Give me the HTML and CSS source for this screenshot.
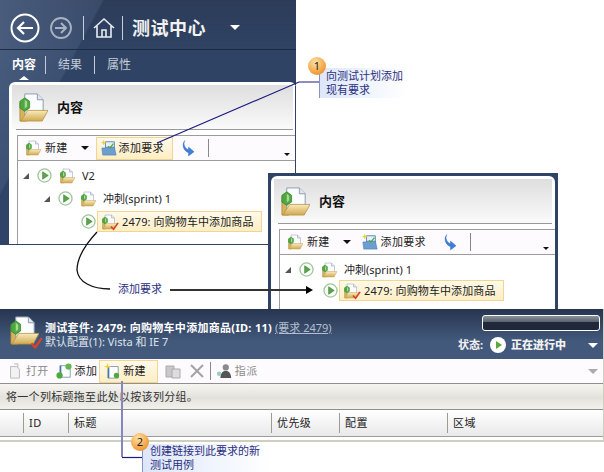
FILE: index.html
```html
<!DOCTYPE html>
<html lang="zh-CN">
<head>
    <meta charset="UTF-8">
    <title>测试中心</title>
    <link rel="stylesheet" href="styles.css">
</head>
<body>
    <svg class="defs" width="0" height="0">
        <defs>
            <linearGradient id="folderFill" x1="0" y1="0" x2="0" y2="1">
                <stop offset="0" stop-color="#f7ebbd"/>
                <stop offset="1" stop-color="#d2a94f"/>
            </linearGradient>
            <symbol id="folder" viewBox="0 0 32 32">
                <path d="M3 11h7v19H3z" fill="#d8b35c" stroke="#a98333" stroke-width=".8"/>
                <path d="M8 2h13l6 6v16H8z" fill="#fbfcfe" stroke="#8f9bb0"/>
                <path d="M21 2v6h6" fill="#dfe5ee" stroke="#8f9bb0"/>
                <path d="M4 30l7-11h21l-6 11z" fill="url(#folderFill)" stroke="#b8923f" stroke-width=".8"/>
                <path d="M8 6l5 3.500v7L8 20l-5-3.500v-7z" fill="#4fa83f" stroke="#2f7d2a" stroke-width=".7"/>
                <path d="M8 8l2.500 2v5L8 17z" fill="#a5dc8e"/>
            </symbol>
            <symbol id="play" viewBox="0 0 16 16">
                <circle cx="8" cy="8" r="7" fill="#fff" stroke="#9cc896" stroke-width="1.400"/>
                <path d="M6 4l6 4-6 4z" fill="#5ca548" stroke="#2f7a2a" stroke-width=".6"/>
            </symbol>
            <symbol id="check" viewBox="0 0 10 10">
                <path d="M1 5l3 3 5-7" fill="none" stroke="#d8412e" stroke-width="1.800"/>
            </symbol>
            <symbol id="refresh" viewBox="0 0 14 18">
                <path d="M3 1C1 5 3 9 7 11V8l6 5-6 4.500V14C2 12-1 6 3 1z" fill="#3f7fd8" stroke="#2a62b5" stroke-width=".4"/>
            </symbol>
            <symbol id="req" viewBox="0 0 18 18">
                <path d="M5 2h10v13H5z" fill="#e6f0fa" stroke="#4d7fb5"/>
                <path d="M1 9h4l1-1h9l2 9H2z" fill="#6e9ed0" stroke="#4d7fb5" stroke-width=".7"/>
                <path d="M8 7l2 2 4-5" fill="none" stroke="#4fa83f" stroke-width="1.400"/>
                <path d="M3 0l1 2 2 1-2 1-1 2-1-2-2-1 2-1z" fill="#f0d040"/>
            </symbol>
        </defs>
    </svg>

    <section class="window win-main">
        <div class="nav-bar">
            <svg class="nav-back" viewBox="0 0 30 30"><circle cx="15" cy="15" r="13.500" fill="none" stroke="#fff" stroke-width="2"/><path d="M23 15H8M14 9l-6 6 6 6" fill="none" stroke="#fff" stroke-width="2.200"/></svg>
            <svg class="nav-fwd" viewBox="0 0 22 22"><circle cx="11" cy="11" r="10" fill="none" stroke="#a9b2c0" stroke-width="1.800"/><path d="M5 11h11M11 6l5 5-5 5" fill="none" stroke="#a9b2c0" stroke-width="2"/></svg>
            <span class="nav-sep"></span>
            <svg class="nav-home" viewBox="0 0 22 22"><path d="M1 11L11 2l10 9M4 9v11h14V9M9 20v-7h4v7" fill="none" stroke="#e8ebf0" stroke-width="1.600"/></svg>
            <span class="nav-sep"></span>
            <span class="nav-title">测试中心</span>
            <span class="arrow-down white nav-arrow"></span>
        </div>
        <div class="tabs">
            <span class="tab active">内容</span>
            <span class="tab">结果</span>
            <span class="tab">属性</span>
        </div>
        <div class="card">
            <div class="card-head">
                <svg class="head-icon"><use href="#folder"/></svg>
                <span class="card-title">内容</span>
            </div>
            <div class="head-rule"></div>
            <div class="toolbar">
                <span class="tool"><svg class="icon"><use href="#folder"/></svg>新建</span>
                <span class="arrow-down tool-arrow"></span>
                <span class="tool hot"><svg class="icon"><use href="#req"/></svg>添加要求</span>
                <svg class="refresh"><use href="#refresh"/></svg>
                <span class="tool-sep"></span>
                <span class="arrow-down tiny"></span>
            </div>
            <div class="tree">
                <div class="node">
                    <span class="twist"></span>
                    <svg class="play"><use href="#play"/></svg>
                    <svg class="icon"><use href="#folder"/></svg>
                    <span>V2</span>
                </div>
                <div class="node lvl1">
                    <span class="twist"></span>
                    <svg class="play"><use href="#play"/></svg>
                    <svg class="icon"><use href="#folder"/></svg>
                    <span>冲刺(sprint) 1</span>
                </div>
                <div class="node lvl2">
                    <svg class="play"><use href="#play"/></svg>
                    <span class="picked"><span class="icon-wrap"><svg class="icon"><use href="#folder"/></svg><svg class="check"><use href="#check"/></svg></span>2479: 向购物车中添加商品</span>
                </div>
            </div>
        </div>
    </section>

    <section class="window win-detail">
        <div class="card">
            <div class="card-head">
                <svg class="head-icon"><use href="#folder"/></svg>
                <span class="card-title">内容</span>
            </div>
            <div class="head-rule"></div>
            <div class="toolbar">
                <span class="tool"><svg class="icon"><use href="#folder"/></svg>新建</span>
                <span class="arrow-down tool-arrow"></span>
                <span class="tool plain"><svg class="icon"><use href="#req"/></svg>添加要求</span>
                <svg class="refresh"><use href="#refresh"/></svg>
                <span class="tool-sep"></span>
                <span class="arrow-down tiny"></span>
            </div>
            <div class="tree">
                <div class="node">
                    <span class="twist"></span>
                    <svg class="play"><use href="#play"/></svg>
                    <svg class="icon"><use href="#folder"/></svg>
                    <span>冲刺(sprint) 1</span>
                </div>
                <div class="node lvl2">
                    <svg class="play"><use href="#play"/></svg>
                    <span class="picked"><span class="icon-wrap"><svg class="icon"><use href="#folder"/></svg><svg class="check"><use href="#check"/></svg></span>2479: 向购物车中添加商品</span>
                </div>
            </div>
        </div>
    </section>

    <section class="window win-suite">
        <div class="suite-head">
            <span class="icon-wrap suite-icon"><svg class="head-icon"><use href="#folder"/></svg><svg class="check big"><use href="#check"/></svg></span>
            <div class="suite-text">
                <div><b>测试套件: 2479: 向购物车中添加商品(ID: 11)</b> <a class="suite-link">(要求 2479)</a></div>
                <div class="suite-config">默认配置(1): Vista 和 IE 7</div>
            </div>
            <div class="suite-side">
                <div class="progress"></div>
                <div class="status">状态: <svg class="status-play" viewBox="0 0 16 16"><circle cx="8" cy="8" r="8" fill="#fff"/><path d="M6 4l6 4-6 4z" fill="#5aa83c"/></svg><b>正在进行中</b><span class="arrow-down white"></span></div>
            </div>
        </div>
        <div class="suite-tools">
            <span class="stool muted"><svg class="icon" viewBox="0 0 16 18"><path d="M3 4h7l3 3v10H3z" fill="#f2f2f2" stroke="#b5b5b5"/><path d="M7 1h4v5" fill="none" stroke="#c5c5c5" stroke-width="1.500"/></svg>打开</span>
            <span class="stool add"><svg class="icon" viewBox="0 0 18 18"><path d="M5 3h11v13H5z" fill="#fff" stroke="#7b96b8"/><path d="M5 3v13" stroke="#3f78b5" stroke-width="2"/><circle cx="4" cy="14" r="3.500" fill="#4fa83f"/><circle cx="14" cy="4" r="3.500" fill="#62b84e"/></svg>添加</span>
            <span class="stool hot"><svg class="icon" viewBox="0 0 18 18"><path d="M5 4h11v13H5z" fill="#fff" stroke="#7b96b8"/><path d="M5 4v13" stroke="#3f78b5" stroke-width="2"/><circle cx="14" cy="14" r="3" fill="#4fa83f"/><path d="M4 0l1 3 3 1-3 1-1 3-1-3-3-1 3-1z" fill="#f0d040"/></svg>新建</span>
            <svg class="icon copy" viewBox="0 0 16 16"><path d="M1 3h8v11H1z" fill="#c9c9c9" stroke="#aaa"/><path d="M7 6h8v9H7z" fill="#ddd" stroke="#aaa"/></svg>
            <svg class="icon del" viewBox="0 0 14 14"><path d="M1 1l12 12M13 1L1 13" stroke="#a3a3a3" stroke-width="2"/></svg>
            <span class="tool-sep short"></span>
            <span class="stool muted"><svg class="icon" viewBox="0 0 18 18"><circle cx="11" cy="5" r="3.500" fill="#8a8a8a"/><path d="M5 17c0-6 3-8 6-8s6 2 6 8z" fill="#555"/><circle cx="3.500" cy="12" r="2.500" fill="#9cc"/></svg>指派</span>
            <span class="arrow-down grey"></span>
        </div>
        <div class="group-bar">将一个列标题拖至此处以按该列分组。</div>
        <div class="col-head">
            <span class="col c-mark"></span>
            <span class="col c-id">ID</span>
            <span class="col c-title">标题</span>
            <span class="col c-pri">优先级</span>
            <span class="col c-cfg">配置</span>
            <span class="col c-area">区域</span>
        </div>
    </section>

    <svg class="wires" width="604" height="472" viewBox="0 0 604 472">
        <path d="M157 143L299 82H320" fill="none" stroke="#1c1c80" stroke-width="1.200"/>
        <path d="M295.500 86V173" fill="none" stroke="#2f4364"/>
        <path d="M97 232C84 246 77 258 77 270C78 282 92 289 110 289" fill="none" stroke="#111" stroke-width="1.300"/>
        <path d="M170 290H308" stroke="#333" stroke-width="2"/>
        <path d="M306 286l7 4-7 4z" fill="#000"/>
        <path d="M122 381V457" stroke="#8585c0" stroke-width="2"/>
        <path d="M122 457.500H143" stroke="#1c1c80" stroke-width="1.200"/>
    </svg>

    <div class="callout call-one"><span class="badge">1</span>向测试计划添加<br>现有要求</div>
    <div class="wire-label">添加要求</div>
    <div class="callout call-two"><span class="badge">2</span>创建链接到此要求的新<br>测试用例</div>
</body>
</html>
```

FILE: styles.css
```css
* {
    box-sizing: border-box;
}
html, body {
    margin: 0;
    height: 100%;
    background: #fff;
    overflow: hidden;
}
body {
    position: relative;
    font-family: "Noto Sans", "Noto Sans CJK SC", sans-serif;
    font-size: 11px;
    line-height: 14px;
    color: #222;
}
.defs {
    position: absolute;
}
svg {
    display: block;
    flex: none;
}

/* the three screenshots lie freely on the page */
.window {
    position: absolute;
}
.win-main {
    left: 0;
    top: 0;
    width: 296px;
    height: 245px;
    display: flex;
    flex-direction: column;
    background:
        linear-gradient(118deg, rgba(110, 130, 165, .45) 0, rgba(90, 110, 145, .3) 24%, transparent 24.500%),
        linear-gradient(#2c3c58, #2f4364 50px, #2f4468);
}
.win-detail {
    left: 268px;
    top: 173px;
    width: 290px;
    height: 136px;
    padding: 3px 3px 0;
    background: #2f4364;
    z-index: 1;
}
.win-suite {
    left: 0;
    top: 309px;
    width: 604px;
    height: 133px;
    display: flex;
    flex-direction: column;
    background: #fff;
    border-bottom: 2px solid #cfcfbf;
    border-right: 1px solid #cfcfbf;
    z-index: 1;
}

/* top nav */
.nav-bar {
    height: 50px;
    display: flex;
    align-items: center;
    padding: 6px 0 0 10px;
    border-bottom: 1px solid #1f2b40;
}
.nav-back {
    width: 30px;
    height: 30px;
}
.nav-fwd {
    width: 22px;
    height: 22px;
    margin-left: 10px;
}
.nav-sep {
    width: 1px;
    height: 24px;
    background: #c8cfda;
    margin-left: 11px;
}
.nav-home {
    width: 22px;
    height: 22px;
    margin-left: 9px;
}
.nav-home + .nav-sep {
    margin-left: 7px;
}
.nav-title {
    margin-left: 9px;
    font-size: 18px;
    letter-spacing: .5px;
    font-weight: 700;
    color: #f2f2f2;
}
.nav-arrow {
    margin-left: 24px;
}
.arrow-down {
    width: 0;
    height: 0;
    border-style: solid;
    border-width: 5px 5px 0;
    border-color: #111 transparent transparent;
    flex: none;
}
.arrow-down.white {
    border-width: 5px 5px 0;
    border-top-color: #fff;
}
.arrow-down.grey {
    border-top-color: #aaa;
    margin-left: auto;
    margin-right: 5px;
}
.arrow-down.tiny {
    border-width: 3px 3px 0;
    margin: 12px 6px 0 auto;
}

.tabs {
    height: 32px;
    display: flex;
    align-items: center;
    padding: 0 0 2px 12px;
    color: #c4ccd8;
    font-size: 12px;
}
.tab {
    padding-right: 12px;
    margin-right: 12px;
    border-right: 1px solid #c4ccd8;
    line-height: 18px;
}
.tab:last-child {
    border-right: 0;
}
.tab.active {
    position: relative;
    color: #fff;
    font-weight: 700;
    padding-right: 9px;
}
.tab.active::after {
    content: "";
    position: absolute;
    left: 7px;
    bottom: -6px;
    border: solid transparent;
    border-width: 0 5px 4px;
    border-bottom-color: #fff;
}

/* content card */
.card {
    flex: 1;
    height: 100%;
    background: #fff;
    border-radius: 6px 6px 0 0;
    overflow: hidden;
    display: flex;
    flex-direction: column;
}
.win-main .card {
    margin-left: 9px;
    margin-bottom: 1px;
}
.card-head {
    height: 44px;
    flex: none;
    margin: 3px 3px 0;
    display: flex;
    align-items: center;
    padding: 0 0 0 5px;
    background: linear-gradient(#dedede, #fafafa);
}
.head-icon {
    width: 31px;
    height: 31px;
}
.card-title {
    margin-left: 9px;
    font-size: 13px;
    font-weight: 700;
    color: #111;
}
.head-rule {
    height: 1px;
    flex: none;
    background: #999;
    margin: 0 3px 5px 7px;
}
.toolbar {
    height: 26px;
    flex: none;
    display: flex;
    align-items: center;
    margin-left: 8px;
    border: 1px solid #9c9c9c;
    border-width: 1px 0 1px 1px;
    background: #fefbfe;
    padding-left: 7px;
    font-size: 11px;
    letter-spacing: .3px;
}
.tool {
    display: flex;
    align-items: center;
    gap: 4px;
}
.tool-arrow {
    border-width: 4px 4px 0;
    margin-left: 13px;
    margin-right: 7px;
}
.tool.hot, .stool.hot {
    height: 23px;
    background: linear-gradient(#fff9e8, #fdeec4);
    border: 1px solid #f2d493;
}
.tool.hot {
    padding: 0 8px 0 4px;
    gap: 2px;
}
.tool.plain {
    padding: 0 0 0 4px;
    gap: 3px;
}
.refresh {
    width: 13px;
    height: 18px;
    margin-left: 9px;
}
.win-detail .refresh {
    margin-left: 18px;
}
.tool-sep {
    width: 1px;
    height: 18px;
    background: #888;
    margin-left: 13px;
}
.icon {
    width: 16px;
    height: 16px;
}
.tree {
    flex: 1;
    padding-top: 3px;
    margin-left: 8px;
    border-left: 1px solid #9c9c9c;
    font-size: 11px;
}
.node {
    display: flex;
    align-items: center;
    height: 23px;
    padding-left: 5px;
    gap: 7px;
}
.node .twist {
    margin-right: 1px;
}
.lvl1 {
    padding-left: 26px;
}
.lvl2 {
    padding-left: 63px;
    gap: 1px;
}
.win-detail .tree {
    padding-top: 4px;
}
.win-detail .node {
    height: 21px;
}
.win-detail .lvl2 {
    padding-left: 43px;
}
.twist {
    width: 0;
    height: 0;
    border-style: solid;
    border-width: 0 0 6px 6px;
    border-color: transparent transparent #555;
}
.play {
    width: 15px;
    height: 15px;
}
.picked {
    display: flex;
    align-items: center;
    gap: 5px;
    height: 21px;
    padding: 0 8px 0 3px;
    letter-spacing: .1px;
    background: linear-gradient(#fff9e8, #fdeec4);
    border: 1px solid #f2d493;
}
.icon-wrap {
    position: relative;
    display: block;
}
.check {
    position: absolute;
    right: -2px;
    bottom: -1px;
    width: 9px;
    height: 9px;
}
.check.big {
    width: 13px;
    height: 13px;
    right: -3px;
    bottom: -2px;
}

/* test suite */
.suite-head {
    height: 50px;
    flex: none;
    display: flex;
    padding: 6px 3px 0 8px;
    color: #eef1f5;
    background: linear-gradient(#27354f, #42597c 32px);
}
.suite-icon {
    width: 32px;
    height: 33px;
}
.suite-text {
    margin-left: 5px;
    padding-top: 6px;
    font-size: 11px;
}
.suite-text b {
    color: #fff;
    letter-spacing: .3px;
}
.suite-link {
    color: #b4bfcf;
    text-decoration: underline;
}
.suite-config {
    color: #dfe3ea;
}
.suite-side {
    margin-left: auto;
    width: 142px;
    display: flex;
    flex-direction: column;
    align-items: flex-end;
}
.progress {
    width: 118px;
    height: 16px;
    border: 1px solid #fff;
    border-radius: 3px;
    background: linear-gradient(#8a929c, #5c6470 40%, #20283a 45%);
}
.status {
    display: flex;
    align-items: center;
    width: 142px;
    margin-top: 6px;
    font-weight: 700;
    color: #f2f2f2;
}
.status-play {
    width: 16px;
    height: 16px;
    margin: 0 5px 0 7px;
}
.status .arrow-down {
    margin-left: auto;
    margin-right: 2px;
}
.suite-tools {
    height: 25px;
    flex: none;
    display: flex;
    align-items: center;
    padding: 0 0 0 7px;
    background: #fefbfe;
    border-bottom: 1px solid #8f8f8f;
    font-size: 11px;
    letter-spacing: .3px;
}
.stool {
    display: flex;
    align-items: center;
    gap: 3px;
    margin-right: 7px;
}
.stool.add {
    margin-right: 2px;
}
.stool.hot {
    padding: 0 11px 0 4px;
    margin-right: 7px;
}
.muted {
    color: #8a8a8a;
}
.copy {
    width: 16px;
    height: 16px;
    margin-right: 9px;
}
.del {
    width: 14px;
    height: 14px;
    margin-right: 6px;
}
.tool-sep.short {
    margin: 0 5px 0 0;
}
.group-bar {
    height: 26px;
    flex: none;
    display: flex;
    align-items: center;
    padding-left: 6px;
    letter-spacing: .3px;
    color: #333;
    background: linear-gradient(#f6f5f0, #e3e2dc 55%, #f2f1ec);
    border-bottom: 1px solid #8f8f8f;
}
.col-head {
    height: 27px;
    flex: none;
    display: flex;
    align-items: center;
    background: linear-gradient(#fff, #e9e9e9);
    border-bottom: 1px solid #9c9c9c;
    font-size: 11px;
    letter-spacing: .4px;
}
.col {
    height: 20px;
    display: flex;
    align-items: center;
    padding-left: 5px;
    border-left: 1px solid #9c9c90;
}
.c-mark {
    width: 23px;
    border-left: 0;
}
.c-id {
    width: 45px;
}
.c-title {
    width: 203px;
}
.c-pri {
    width: 68px;
}
.c-cfg {
    width: 108px;
}
.c-area {
    flex: 1;
}

/* connectors and callouts over the screenshots */
.wires {
    position: absolute;
    left: 0;
    top: 0;
    z-index: 2;
}
.callout {
    position: absolute;
    z-index: 3;
    padding: 1px 0 0 6px;
    color: #2a2f80;
    border-left: 1px solid #8c90c4;
    background: linear-gradient(90deg, #dde7fa, #fff);
}
.call-one {
    left: 319px;
    top: 68px;
    width: 88px;
    height: 30px;
}
.call-two {
    left: 142px;
    top: 444px;
    width: 127px;
    height: 28px;
    padding-top: 0;
    padding-left: 7px;
}
.badge {
    position: absolute;
    left: -12px;
    top: -11px;
    width: 18px;
    height: 18px;
    border-radius: 50%;
    background: radial-gradient(circle at 40% 30%, #fde0a8, #f4a545 60%, #dd7f1c);
    color: #222;
    font-size: 11px;
    line-height: 18px;
    text-align: center;
}
.wire-label {
    position: absolute;
    left: 118px;
    top: 282px;
    z-index: 3;
    color: #2a2f80;
}
```
